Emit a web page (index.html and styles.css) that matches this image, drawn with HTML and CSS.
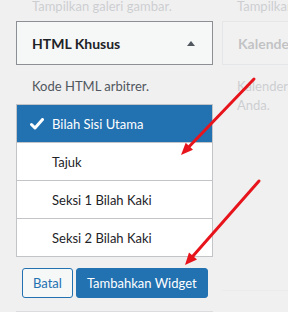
FILE: index.html
```html
<!DOCTYPE html>
<html lang="id">
<head>
    <meta charset="UTF-8">
    <meta name="viewport" content="width=device-width, initial-scale=1.0">
    <title>Widget</title>
    <link rel="stylesheet" href="styles.css">
</head>
<body>
    <div class="widgets">
        <div class="widget-col">
            <p class="widget-desc faded">Tampilkan galeri gambar.</p>
            <div class="widget-title">
                <h3>HTML Khusus</h3>
                <span class="caret"></span>
            </div>
            <p class="widget-desc">Kode HTML arbitrer.</p>

            <ul class="chooser">
                <li class="selected">
                    <svg class="check" width="14" height="12" viewBox="0 0 14 12">
                        <path d="M1.5 6.5 L5 10 L12.5 1.5" fill="none" stroke="#fff" stroke-width="3" stroke-linecap="round" stroke-linejoin="round"/>
                    </svg>
                    Bilah Sisi Utama
                </li>
                <li>Tajuk</li>
                <li>Seksi 1 Bilah Kaki</li>
                <li>Seksi 2 Bilah Kaki</li>
            </ul>

            <div class="chooser-actions">
                <button class="btn">Batal</button>
                <button class="btn btn-primary">Tambahkan Widget</button>
            </div>
            <div class="next-widget"></div>
        </div>

        <div class="widget-col side faded">
            <p class="widget-desc">Tampilkan</p>
            <div class="widget-title ghost">
                <h3>Kalender</h3>
            </div>
            <p class="widget-desc two-line">Kalender d<br>Anda.</p>
            <div class="spacer"></div>
            <div class="next-widget ghost"></div>
        </div>
    </div>

    <!-- red arrows drawn over the screenshot -->
    <svg class="arrows" width="288" height="312" viewBox="0 0 288 312">
        <line x1="254" y1="79" x2="189.5" y2="146.2" stroke="#e8141c" stroke-width="3" stroke-linecap="round"/>
        <polygon points="181,155 193,149.8 185.7,142.7" fill="#e8141c"/>
        <line x1="259" y1="181" x2="193" y2="256" stroke="#e8141c" stroke-width="3" stroke-linecap="round"/>
        <polygon points="185,265 197,259.5 189,252.5" fill="#e8141c"/>
    </svg>
</body>
</html>
```

FILE: styles.css
```css
* {
    box-sizing: border-box;
}

body {
    margin: 0;
    background-color: #f0f0f1;
    font-family: Lato, "Noto Sans", sans-serif;
    font-size: 13px;
    color: #3c434a;
    width: 288px;
    height: 312px;
    overflow: hidden;
    position: relative;
}

.widgets {
    display: flex;
    gap: 9px;
    padding-left: 16px;
}

.widget-col {
    width: 197px;
    flex-shrink: 0;
}

.side {
    width: 120px;
}

.faded {
    opacity: 0.22;
}

.widget-desc {
    margin: 0;
    padding-left: 16px;
    line-height: 18px;
    color: #50575e;
    white-space: nowrap;
}

.side .widget-desc {
    padding-left: 15px;
}

.widget-desc.two-line {
    line-height: 19px;
}

.widget-col > .widget-desc:first-child {
    margin-top: -3px;
    margin-bottom: 6px;
}

.widget-title {
    height: 44px;
    border: 1px solid #8c8f94;
    background: #f6f7f7;
    display: flex;
    align-items: center;
    justify-content: space-between;
    padding: 0 17px 0 15px;
}

.widget-title h3 {
    margin: 0;
    font-size: 14px;
    font-weight: 700;
    color: #1d2327;
}

.widget-title.ghost {
    border-color: #c3c4c7;
}

.caret {
    width: 0;
    height: 0;
    border-left: 4px solid transparent;
    border-right: 4px solid transparent;
    border-bottom: 5px solid #50575e;
}

.widget-title + .widget-desc {
    margin-top: 12px;
    margin-bottom: 9px;
}

.chooser {
    list-style: none;
    margin: 0;
    padding: 0;
    background: #fff;
    border: 1px solid #c3c4c7;
}

.chooser li {
    height: 38px;
    display: flex;
    align-items: center;
    padding-left: 35px;
    color: #1d2327;
    border-top: 1px solid #c3c4c7;
}

.chooser li:first-child {
    border-top: none;
    height: 37px;
}

.chooser li.selected {
    background: #2271b1;
    color: #fff;
    padding-left: 13px;
}

.check {
    margin-right: 8px;
}

.chooser-actions {
    display: flex;
    gap: 3px;
    padding-left: 6px;
    margin-top: 11px;
}

.btn {
    height: 30px;
    padding: 0 10px;
    font-family: inherit;
    font-size: 13px;
    white-space: nowrap;
    border: 1px solid #2271b1;
    border-radius: 3px;
    background: #f6f7f7;
    color: #2271b1;
}

.btn-primary {
    background: #2271b1;
    color: #fff;
    padding: 0 10px;
}

.next-widget {
    margin-top: 13px;
    height: 20px;
    border-top: 1px solid #dcdcde;
}

.spacer {
    height: 153px;
}

.arrows {
    position: absolute;
    left: 0;
    top: 0;
    pointer-events: none;
}
```
